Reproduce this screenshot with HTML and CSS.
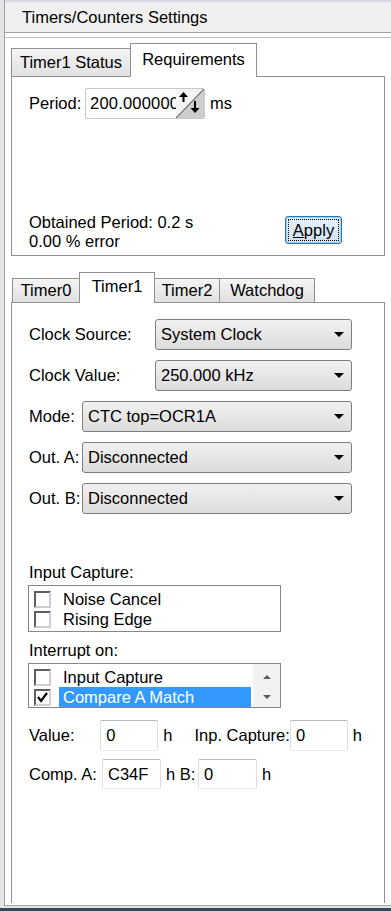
FILE: index.html
```html
<!DOCTYPE html>
<html>
<head>
    <title>Timers/Counters Settings</title>
    <link rel="stylesheet" href="styles.css">
</head>
<body>
    <div class="window">
        <div class="pane">
            <div class="topline"></div>
            <div class="header">Timers/Counters Settings</div>
            <div class="header-gap"></div>

            <div class="content">
                <div class="tabs tabs-upper">
                    <div class="tab" style="width: 120px">Timer1 Status</div>
                    <div class="tab active" style="width: 127px">Requirements</div>
                </div>
                <div class="panel panel-upper">
                    <div class="period-row">
                        <span class="period-label">Period:</span>
                        <div class="spin-box">
                            <span class="spin-value">200.000000</span>
                            <svg class="spin-btn" width="28" height="29" viewBox="0 0 28 29">
                                <polygon points="0,0 28,0 0,29" fill="#f3f3f3"/>
                                <polygon points="28,0 28,29 0,29" fill="#cdcdcd"/>
                                <line x1="0" y1="29" x2="28" y2="0" stroke="#6a6a6a" stroke-width="1.2"/>
                                <path d="M3 8 L7.5 3 L12 8 H8.5 V13 H6.5 V8 Z" fill="#000"/>
                                <path d="M14.5 19 H18 V12 H20 V19 H23.5 L19 24 Z" fill="#000"/>
                            </svg>
                        </div>
                        <span class="unit">ms</span>
                    </div>
                    <div class="result-row">
                        <div class="result-text">
                            <div>Obtained Period: 0.2 s</div>
                            <div>0.00 % error</div>
                        </div>
                        <button class="apply-btn"><span class="focus-ring"><u>A</u>pply</span></button>
                    </div>
                </div>

                <div class="tabs tabs-lower">
                    <div class="tab" style="width: 68px">Timer0</div>
                    <div class="tab active" style="width: 76px">Timer1</div>
                    <div class="tab" style="width: 66px">Timer2</div>
                    <div class="tab" style="width: 96px">Watchdog</div>
                </div>
                <div class="panel panel-lower">
                    <div class="field-row">
                        <span class="field-label">Clock Source:</span>
                        <div class="combo combo-short"><span>System Clock</span><span class="arrow"></span></div>
                    </div>
                    <div class="field-row">
                        <span class="field-label">Clock Value:</span>
                        <div class="combo combo-short"><span>250.000 kHz</span><span class="arrow"></span></div>
                    </div>
                    <div class="field-row">
                        <span class="field-label narrow">Mode:</span>
                        <div class="combo combo-long"><span>CTC top=OCR1A</span><span class="arrow"></span></div>
                    </div>
                    <div class="field-row">
                        <span class="field-label narrow">Out. A:</span>
                        <div class="combo combo-long"><span>Disconnected</span><span class="arrow"></span></div>
                    </div>
                    <div class="field-row">
                        <span class="field-label narrow">Out. B:</span>
                        <div class="combo combo-long"><span>Disconnected</span><span class="arrow"></span></div>
                    </div>

                    <div class="group-label first">Input Capture:</div>
                    <div class="checklist">
                        <div class="checklist-items">
                            <div class="check-row"><span class="checkbox"></span><span class="check-text">Noise Cancel</span></div>
                            <div class="check-row"><span class="checkbox"></span><span class="check-text">Rising Edge</span></div>
                        </div>
                    </div>

                    <div class="group-label">Interrupt on:</div>
                    <div class="checklist checklist-scroll">
                        <div class="checklist-items">
                            <div class="check-row"><span class="checkbox"></span><span class="check-text">Input Capture</span></div>
                            <div class="check-row">
                                <span class="checkbox">
                                    <svg width="13" height="13" viewBox="0 0 13 13"><path d="M2 6 L5 10 L11 2" fill="none" stroke="#000" stroke-width="2.2"/></svg>
                                </span>
                                <span class="check-text selected">Compare A Match</span>
                            </div>
                        </div>
                        <div class="scrollbar">
                            <div class="scroll-btn"><span class="tri-up"></span></div>
                            <div class="scroll-btn"><span class="tri-down"></span></div>
                        </div>
                    </div>

                    <div class="value-row">
                        <span class="value-label">Value:</span>
                        <div class="value-input">0</div>
                        <span class="suffix">h</span>
                        <span class="value-label2">Inp. Capture:</span>
                        <div class="value-input">0</div>
                        <span class="suffix">h</span>
                    </div>
                    <div class="value-row second">
                        <span class="value-label">Comp. A:</span>
                        <div class="value-input">C34F</div>
                        <span class="suffix">h B:</span>
                        <div class="value-input">0</div>
                        <span class="suffix">h</span>
                    </div>
                </div>
            </div>
        </div>
    </div>
</body>
</html>
```

FILE: styles.css
```css
body {
    margin: 0;
    background: #3c4754;
    font-family: "Liberation Sans", Arial, sans-serif;
    font-size: 16.5px;
    line-height: 19px;
    color: #000;
}

.window {
    height: 908px;
    background: #e4e4e4;
    padding: 0 0 2px 4px;
    box-sizing: border-box;
}

.pane {
    height: 100%;
    background: #fff;
    border-left: 1px solid #9c9ea6;
    display: flex;
    flex-direction: column;
}

.topline {
    height: 2px;
    background: #d3d9e6;
}

.header {
    height: 30px;
    background: #f0f0f0;
    border-bottom: 1px solid #a3a3a3;
    padding-left: 17px;
    display: flex;
    align-items: center;
}

.header-gap {
    height: 4px;
}

.content {
    flex: 1;
    min-height: 0;
    overflow: hidden;
    border-top: 1px solid #c4c4c4;
    border-bottom: 1px solid #a6a6a6;
    display: flex;
    flex-direction: column;
}

/* tab strips */
.tabs {
    display: flex;
    align-items: flex-end;
    margin: 0 6px;
    padding-left: 1px;
}

.tabs-upper {
    height: 33px;
    margin-top: 5px;
}

.tabs-lower {
    height: 30px;
    margin-top: 16px;
    padding-left: 2px;
}

.tab {
    height: 28px;
    box-sizing: border-box;
    border: 1px solid #8e9096;
    border-bottom: none;
    background: linear-gradient(#f4f4f4, #e1e1e1);
    display: flex;
    align-items: center;
    justify-content: center;
    white-space: nowrap;
    margin-left: -1px;
}

.tabs-lower .tab {
    height: 24px;
}

.tab.active {
    height: 34px;
    background: #fff;
    margin-bottom: -1px;
    padding-bottom: 3px;
    position: relative;
    z-index: 1;
}

.tabs-lower .tab.active {
    height: 31px;
    padding-bottom: 4px;
}

.panel {
    margin: 0 6px;
    border: 1px solid #8e9096;
    box-sizing: border-box;
    padding-left: 17px;
}

/* requirements page */
.panel-upper {
    height: 180px;
    padding-top: 11px;
    padding-bottom: 4px;
    display: flex;
    flex-direction: column;
}

.period-row {
    display: flex;
    align-items: center;
    height: 31px;
}

.period-label {
    width: 56px;
}

.spin-box {
    width: 120px;
    height: 31px;
    box-sizing: border-box;
    border: 1px solid #c3c7cf;
    border-radius: 2px;
    display: flex;
    align-items: center;
}

.spin-value {
    flex: 1;
    overflow: hidden;
    white-space: nowrap;
    padding-left: 4px;
    letter-spacing: 0.2px;
}

.spin-btn {
    flex: none;
    display: block;
}

.unit {
    margin-left: 5px;
}

.result-row {
    margin-top: auto;
    display: flex;
    align-items: flex-end;
    justify-content: space-between;
    padding-right: 42px;
}

.apply-btn {
    width: 57px;
    height: 28px;
    margin-bottom: 7px;
    padding: 2px;
    font: inherit;
    color: #000;
    border: 1px solid #2f76b0;
    border-radius: 3px;
    background: linear-gradient(#e8f2fa, #cfe0ee);
    box-shadow: inset 0 0 0 1px #8fd0f7;
    display: flex;
}

.focus-ring {
    flex: 1;
    border: 1px dotted #000;
    display: flex;
    align-items: center;
    justify-content: center;
}

/* timer page */
.panel-lower {
    flex: 1;
    border-bottom: none;
    margin-bottom: 2px;
    padding-top: 16px;
}

.field-row {
    display: flex;
    align-items: center;
    height: 31px;
}

.field-row + .field-row {
    margin-top: 10px;
}

.field-label {
    width: 126px;
    white-space: nowrap;
}

.field-label.narrow {
    width: 53px;
}

.combo {
    height: 31px;
    box-sizing: border-box;
    border: 1px solid #7e7e7e;
    border-radius: 3px;
    background: linear-gradient(#f1f1f1, #dcdcdc);
    padding: 0 7px 0 5px;
    display: flex;
    align-items: center;
    justify-content: space-between;
}

.combo-short {
    width: 197px;
}

.combo-long {
    width: 270px;
}

.arrow {
    width: 0;
    height: 0;
    border-left: 5px solid transparent;
    border-right: 5px solid transparent;
    border-top: 5px solid #000;
}

.group-label {
    margin-top: 9px;
    margin-bottom: 3px;
}

.group-label.first {
    margin-top: 49px;
}

.checklist {
    width: 253px;
    margin-left: -1px;
    box-sizing: border-box;
    border: 1px solid #84878e;
    display: flex;
}

.checklist-items {
    flex: 1;
    padding: 3px 0 2px;
}

.checklist-scroll .checklist-items {
    padding-bottom: 0;
}

.check-row {
    display: flex;
    align-items: center;
    height: 20px;
}

.checkbox {
    width: 17px;
    height: 17px;
    box-sizing: border-box;
    margin-left: 5px;
    border: 2px solid;
    border-color: #5e5e5e #cfcfcf #cfcfcf #5e5e5e;
    background: #fff;
    flex: none;
    display: flex;
    align-items: center;
    justify-content: center;
}

.checkbox svg {
    display: block;
}

.check-text {
    flex: 1;
    height: 20px;
    margin-left: 8px;
    margin-right: 2px;
    padding-left: 4px;
    display: flex;
    align-items: center;
    white-space: nowrap;
}

.check-text.selected {
    background: #3399ff;
    color: #fff;
}

.scrollbar {
    width: 27px;
    background: #f2f2f2;
    padding-top: 3px;
    display: flex;
    flex-direction: column;
}

.scroll-btn {
    height: 20px;
    display: flex;
    align-items: center;
    justify-content: center;
}

.tri-up {
    width: 0;
    height: 0;
    border-left: 4px solid transparent;
    border-right: 4px solid transparent;
    border-bottom: 4px solid #5c5c5c;
}

.tri-down {
    width: 0;
    height: 0;
    border-left: 4px solid transparent;
    border-right: 4px solid transparent;
    border-top: 4px solid #5c5c5c;
}

.value-row {
    display: flex;
    align-items: center;
    height: 31px;
    margin-top: 12px;
}

.value-row.second {
    height: 30px;
    margin-top: 8px;
}

.value-label {
    width: 73px;
    white-space: nowrap;
}

.value-label2 {
    width: 96px;
    white-space: nowrap;
}

.value-input {
    width: 59px;
    height: 100%;
    box-sizing: border-box;
    border: 1px solid;
    border-color: #b5b8bf #dbdfe6 #e3e9ef #dbdfe6;
    border-radius: 2px;
    padding-left: 5px;
    display: flex;
    align-items: center;
}

.suffix {
    width: 37px;
    padding-left: 5px;
    box-sizing: border-box;
    white-space: nowrap;
}
```
